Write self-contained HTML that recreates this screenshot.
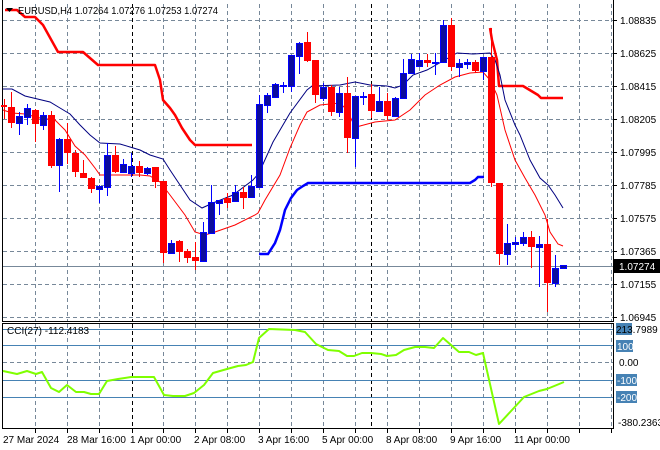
<!DOCTYPE html>
<html><head><meta charset="utf-8"><style>
html,body{margin:0;padding:0;background:#fff;width:660px;height:450px;overflow:hidden}
svg{display:block;font-family:"Liberation Sans",sans-serif}
</style></head><body>
<svg width="660" height="450" viewBox="0 0 660 450" xmlns="http://www.w3.org/2000/svg">
<rect width="660" height="450" fill="#fff"/>
<g stroke="#778899" stroke-width="1" stroke-dasharray="4,3" fill="none">
<path d="M3 20.5H613M3 53.5H613M3 86.5H613M3 119.5H613M3 152.5H613M3 185.5H613M3 218.5H613M3 251.5H613M3 284.5H613M3 317.5H613"/>
<path d="M35.5 4V321M67.5 4V321M99.5 4V321M163.5 4V321M195.5 4V321M227.5 4V321M259.5 4V321M291.5 4V321M323.5 4V321M355.5 4V321M387.5 4V321M419.5 4V321M451.5 4V321M483.5 4V321M515.5 4V321M547.5 4V321M579.5 4V321M611.5 4V321"/>
<path d="M35.5 324V428M67.5 324V428M99.5 324V428M163.5 324V428M195.5 324V428M227.5 324V428M259.5 324V428M291.5 324V428M323.5 324V428M355.5 324V428M387.5 324V428M419.5 324V428M451.5 324V428M483.5 324V428M515.5 324V428M547.5 324V428M579.5 324V428M611.5 324V428"/>
<path d="M3 362.5H613"/>
</g>
<g stroke="#000" stroke-dasharray="4,3"><path d="M132.5 4V321M371.5 4V321M132.5 324V428M371.5 324V428"/></g>
<g stroke="#4682b4"><path d="M3 329.5H613M3 345.5H613M3 380.5H613M3 397.5H613"/></g>
<g stroke="#000" fill="none">
<path d="M2.5 0V321.5H613.5V0"/>
<path d="M2.5 323.5H613.5V428.5H2.5Z"/>
</g>
<path d="M3 266.5H613" stroke="#778899"/>
<g stroke="#ff0000" stroke-width="2.5" fill="none" stroke-linejoin="round">
<path d="M5 10H17L25 17H35L43 25L58 52H83L98 65H155L160 80L163 100L170 108L175 115L182 128L190 140L195 145H252"/>
<path d="M490 28L492 40L497 60L499 86H523L538 95L541 98H563"/>
</g>
<path d="M259 254H268L275 243L280 230L285 210L291 198L297 190L303 186L308 183H470L475 180L478 177H484" stroke="#0000ff" stroke-width="2.5" fill="none"/>
<path d="M3 89H12L25 96L50 102L60 108L70 114L80 125L90 135L100 143L120 144L130 147L140 150L150 155L163 159L170 170L180 185L190 200L202 208L213 203L233 195L253 180L259 173L273 142L290 113L307 90L312 86L340 85L355 82L370 85L387 86L395 88L403 85L413 75L427 70L443 61L457 53L473 54L490 53L495 60L500 75L505 100L515 125L520 135L530 160L540 178L548 185L555 195L563 208" stroke="#000080" stroke-width="1" fill="none"/>
<path d="M3 110L12 113L25 114L40 118L55 120L65 130L75 146L85 155L95 168L100 175H140L150 176L160 182L170 195L185 215L195 232L205 235L215 232L235 225L255 215L258 213L265 200L280 175L290 148L300 125L307 112L320 105L340 103L347 110L355 127L360 126L375 122L395 120L410 110L425 95L440 85L455 77L470 73L483 72L490 80L497 95L505 130L515 160L525 178L535 195L545 215L550 232L558 244L563 246" stroke="#ff0000" stroke-width="1" fill="none"/>
<path stroke="#ff0000" stroke-width="1" d="M4.5 99V119M11.5 92V128M35.5 109V142M51.5 111V168M67.5 123V164M75.5 150V177M83.5 160V178M91.5 177V193M115.5 146V173M139.5 161V177M155.5 167V188M163.5 181V263M179.5 240V262M187.5 249V263M195.5 242V270M227.5 193V208M243.5 187V209M307.5 32V62M315.5 60V103M331.5 85V116M347.5 77V153M371.5 84V118M387.5 93V120M427.5 54V67M451.5 18V71M475.5 60V73M491.5 28V187M499.5 183V265M531.5 231V268M547.5 219V312"/>
<path stroke="#0000ff" stroke-width="1" d="M19.5 112V135M27.5 104V125M43.5 112V130M59.5 138V192M99.5 185V203M107.5 143V196M123.5 159V173M131.5 153V177M147.5 167V175M171.5 240V254M203.5 222V262M211.5 185V233M219.5 200V215M235.5 185V202M251.5 175V198M259.5 95V187M267.5 93V113M275.5 83V98M283.5 82V93M291.5 55V92M299.5 42V74M323.5 83V101M339.5 87V117M355.5 96V167M363.5 92V105M379.5 87V111M395.5 97V117M403.5 59V98M411.5 54V74M419.5 53V67M435.5 53V75M443.5 20V63M459.5 59V77M467.5 59V69M483.5 57V80M507.5 224V265M515.5 237V250M523.5 232V246M539.5 236V287M555.5 255V287M563.5 265V269"/>
<g fill="#ff0000">
<rect x="1" y="105" width="6" height="2"/><rect x="8" y="107" width="7" height="16"/><rect x="32" y="110" width="7" height="14"/><rect x="48" y="115" width="7" height="51"/><rect x="64" y="139" width="7" height="14"/><rect x="72" y="153" width="7" height="19"/><rect x="80" y="173" width="7" height="5"/><rect x="88" y="178" width="7" height="11"/><rect x="112" y="155" width="7" height="17"/><rect x="136" y="166" width="7" height="7"/><rect x="152" y="167" width="7" height="15"/><rect x="160" y="181" width="7" height="72"/><rect x="176" y="241" width="7" height="11"/><rect x="184" y="251" width="7" height="7"/><rect x="192" y="257" width="7" height="4"/><rect x="224" y="198" width="7" height="5"/><rect x="240" y="192" width="7" height="6"/><rect x="304" y="42" width="7" height="19"/><rect x="312" y="60" width="7" height="35"/><rect x="328" y="87" width="7" height="25"/><rect x="344" y="93" width="7" height="45"/><rect x="368" y="94" width="7" height="17"/><rect x="384" y="101" width="7" height="15"/><rect x="424" y="60" width="7" height="3"/><rect x="448" y="25" width="7" height="42"/><rect x="472" y="62" width="7" height="9"/><rect x="488" y="57" width="7" height="126"/><rect x="496" y="183" width="7" height="71"/><rect x="528" y="237" width="7" height="10"/><rect x="544" y="244" width="7" height="39"/>
</g>
<g fill="#0c0c9c" stroke="#0000ff" stroke-width="1">
<rect x="16.5" y="116.5" width="6" height="7"/><rect x="24.5" y="108.5" width="6" height="9"/><rect x="40.5" y="115.5" width="6" height="10"/><rect x="56.5" y="139.5" width="6" height="26"/><rect x="96.5" y="186.5" width="6" height="3"/><rect x="104.5" y="155.5" width="6" height="32"/><rect x="120.5" y="164.5" width="6" height="8"/><rect x="128.5" y="166.5" width="6" height="7"/><rect x="144.5" y="168.5" width="6" height="5"/><rect x="168.5" y="243.5" width="6" height="10"/><rect x="200.5" y="232.5" width="6" height="29"/><rect x="208.5" y="202.5" width="6" height="31"/><rect x="216.5" y="200.5" width="6" height="3"/><rect x="232.5" y="192.5" width="6" height="9"/><rect x="248.5" y="186.5" width="6" height="11"/><rect x="256.5" y="104.5" width="6" height="83"/><rect x="264.5" y="95.5" width="6" height="10"/><rect x="272.5" y="84.5" width="6" height="13"/><rect x="280.5" y="85.5" width="6" height="1"/><rect x="288.5" y="55.5" width="6" height="31"/><rect x="296.5" y="43.5" width="6" height="13"/><rect x="320.5" y="87.5" width="6" height="11"/><rect x="336.5" y="93.5" width="6" height="19"/><rect x="352.5" y="96.5" width="6" height="42"/><rect x="360.5" y="96.5" width="6" height="1"/><rect x="376.5" y="101.5" width="6" height="10"/><rect x="392.5" y="98.5" width="6" height="18"/><rect x="400.5" y="73.5" width="6" height="25"/><rect x="408.5" y="59.5" width="6" height="14"/><rect x="416.5" y="60.5" width="6" height="6"/><rect x="432.5" y="62.5" width="6" height="1"/><rect x="440.5" y="25.5" width="6" height="37"/><rect x="456.5" y="63.5" width="6" height="4"/><rect x="464.5" y="62.5" width="6" height="2"/><rect x="480.5" y="57.5" width="6" height="14"/><rect x="504.5" y="243.5" width="6" height="11"/><rect x="512.5" y="242.5" width="6" height="2"/><rect x="520.5" y="237.5" width="6" height="6"/><rect x="536.5" y="244.5" width="6" height="3"/><rect x="552.5" y="268.5" width="6" height="15"/><rect x="560.5" y="265.5" width="6" height="3"/>
</g>
<path d="M3 371L17 374L27 371L36 374L42 372L51 388L59 392L67 385L76 392L84 392L91 394L99 394L107 381L118 379L131 377L154 377L164 395L173 396L185 396L194 393L204 385L213 373L227 369L238 366L246 365L253 362L259 338L269 329L295 330L305 332L316 344L328 350L339 351L347 356L354 356L362 353L371 353L381 354L387 356L396 355L404 350L415 347L425 347L434 348L443 338L459 352L469 352L476 355L483 353L499 424L512 410L524 397L539 391L547 389L564 382" stroke="#7fff00" stroke-width="2" fill="none" stroke-linejoin="round"/>
<path d="M6 8H13L9.5 12Z" fill="#000"/>
<text x="18" y="14" font-size="10.5" fill="#000" textLength="200" lengthAdjust="spacingAndGlyphs">EURUSD,H4  1.07264 1.07276 1.07253 1.07274</text>
<text x="7" y="334" font-size="10" fill="#000">CCI(27) -112.4183</text>
<g font-size="10" fill="#000">
<g stroke="#000"><path d="M613 20.5H617M613 53.5H617M613 86.5H617M613 119.5H617M613 152.5H617M613 185.5H617M613 218.5H617M613 251.5H617M613 284.5H617M613 317.5H617"/></g>
<text x="620" y="24">1.08835</text><text x="620" y="57">1.08625</text><text x="620" y="90">1.08415</text><text x="620" y="123">1.08205</text><text x="620" y="156">1.07995</text><text x="620" y="189">1.07785</text><text x="620" y="222">1.07575</text><text x="620" y="255">1.07365</text><text x="620" y="288">1.07155</text><text x="620" y="321">1.06945</text>
<rect x="614" y="259" width="46" height="14" fill="#000"/>
<text x="619" y="270" fill="#fff">1.07274</text>
<rect x="616" y="323" width="16" height="12" fill="#4682b4"/>
<text x="616" y="333">213.7989</text>
<rect x="616" y="340" width="17" height="12" fill="#4682b4"/><text x="617" y="350" fill="#fff">100</text>
<text x="619" y="366">0.00</text>
<rect x="616" y="374" width="21" height="12" fill="#4682b4"/><text x="617" y="384" fill="#fff">-100</text>
<rect x="616" y="391" width="21" height="12" fill="#4682b4"/><text x="617" y="401" fill="#fff">-200</text>
<text x="618" y="426">-380.2363</text>
</g>
<g stroke="#000"><path d="M35.5 429V433M67.5 429V433M99.5 429V433M132.5 429V433M163.5 429V433M195.5 429V433M227.5 429V433M259.5 429V433M291.5 429V433M323.5 429V433M355.5 429V433M387.5 429V433M419.5 429V433M451.5 429V433M483.5 429V433M515.5 429V433M547.5 429V433M579.5 429V433M611.5 429V433"/></g>
<g font-size="10" fill="#000">
<text x="3" y="443">27 Mar 2024</text><text x="67" y="443">28 Mar 16:00</text><text x="130" y="443">1 Apr 00:00</text><text x="194" y="443">2 Apr 08:00</text><text x="258" y="443">3 Apr 16:00</text><text x="322" y="443">5 Apr 00:00</text><text x="386" y="443">8 Apr 08:00</text><text x="450" y="443">9 Apr 16:00</text><text x="514" y="443">11 Apr 00:00</text>
</g>
</svg>
</body></html>
